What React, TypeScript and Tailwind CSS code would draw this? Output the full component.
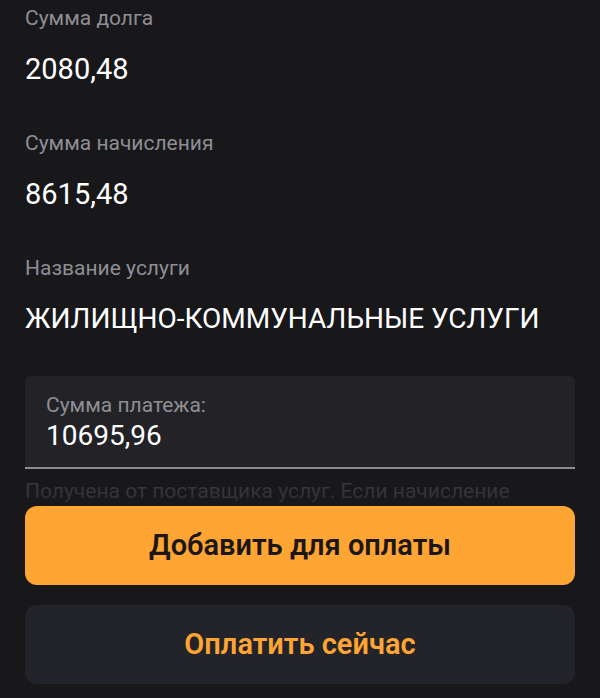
import React from "react";

const rows = [
  { label: "Сумма долга", value: "2080,48", size: "text-[29px]" },
  { label: "Сумма начисления", value: "8615,48", size: "text-[29px]" },
  { label: "Название услуги", value: "ЖИЛИЩНО-КОММУНАЛЬНЫЕ УСЛУГИ", size: "text-[28px]" },
];

function InfoRow({ label, value, size }: { label: string; value: string; size: string }) {
  return (
    <div className="mb-[45px]">
      <div className="text-[21px] leading-[24px] text-[#8e8e93]">{label}</div>
      <div className={`mt-[22px] ${size} leading-[34px] text-white`}>{value}</div>
    </div>
  );
}

export default function App() {
  return (
    <div
      className="flex h-[698px] w-[600px] flex-col overflow-hidden bg-[#18181b]"
      style={{ fontFamily: "Roboto, 'Noto Sans', sans-serif" }}
    >
      <div className="relative flex-1 overflow-hidden px-[25px] pt-[6px]">
        {rows.map((r) => (
          <InfoRow key={r.label} label={r.label} value={r.value} size={r.size} />
        ))}

        <div className="-mt-[5px] rounded-t-[6px] border-b-2 border-[#8a8a8f] bg-[#232327] px-[21px] pb-[15px] pt-[18px]">
          <div className="text-[21px] leading-[22px] text-[#8e8e93]">Сумма платежа:</div>
          <div className="mt-[4px] text-[28px] leading-[32px] text-white">10695,96</div>
        </div>

        <p className="mt-[9px] text-[21px] leading-[26px] text-[#3c3c40]">
          Получена от поставщика услуг. Если начисление
          отличается от суммы в квитанции, измените её.
        </p>

        <div className="pointer-events-none absolute inset-x-0 bottom-0 h-[30px] bg-gradient-to-b from-transparent to-[#18181b]/40" />
      </div>

      <div className="flex flex-col gap-[20px] px-[25px] pb-[14px]">
        <button
          type="button"
          className="flex h-[79px] items-center justify-center rounded-[12px] bg-[#ffa533] text-[29px] font-semibold text-[#1c1712]"
        >
          Добавить для оплаты
        </button>
        <button
          type="button"
          className="flex h-[79px] items-center justify-center rounded-[12px] bg-[#232429] text-[29px] font-semibold text-[#ffa533]"
        >
          Оплатить сейчас
        </button>
      </div>
    </div>
  );
}
